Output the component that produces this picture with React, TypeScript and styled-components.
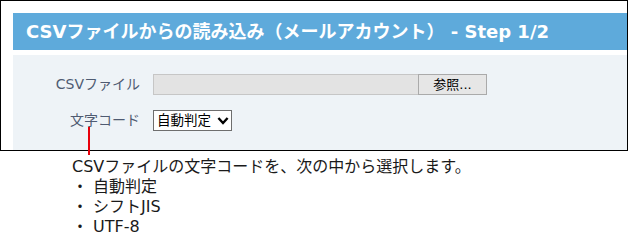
import styled, { createGlobalStyle } from 'styled-components';

const GlobalStyle = createGlobalStyle`
    body {
        margin: 0;
        background: #ffffff;
        font-family: "DejaVu Sans", "Noto Sans CJK JP", sans-serif;
        line-height: 1.2;
    }
`;

//STYLE

const Page = styled.div`
    position: relative;
    width: 628px;
`;

const Frame = styled.div`
    box-sizing: border-box;
    width: 628px;
    height: 151px;
    border: 1px solid #000;
    padding: 12px 0 0 12px;
    display: flex;
    flex-direction: column;
    gap: 5px;
`;

const Header = styled.div`
    height: 37px;
    background: #5eaadb;
    color: #fff;
    font-size: 18px;
    font-weight: 700;
    display: flex;
    align-items: center;
    padding-left: 13px;
    white-space: nowrap;
`;

const Panel = styled.div`
    flex: 1;
    background: #eef3f7;
    padding-top: 19px;
    display: grid;
    grid-template-columns: 127px auto;
    column-gap: 13px;
    row-gap: 15px;
    align-content: start;
`;

const Label = styled.div`
    height: 21px;
    display: flex;
    align-items: center;
    justify-content: flex-end;
    font-size: 14px;
    color: #4f5b72;
    white-space: nowrap;
`;

const FileRow = styled.div`
    display: flex;
`;

const FileBox = styled.div`
    box-sizing: border-box;
    width: 265px;
    height: 21px;
    background: #e3e3e3;
    border: 1px solid #c6c6c6;
    border-right: none;
`;

const Browse = styled.div`
    box-sizing: border-box;
    width: 69px;
    height: 21px;
    background: #e6e6e6;
    border: 1px solid #aaaaaa;
    display: flex;
    align-items: center;
    justify-content: center;
    font-size: 13px;
    color: #000;
`;

const Select = styled.div`
    box-sizing: border-box;
    width: 79px;
    height: 21px;
    background: #fff;
    border: 1px solid #6e6e6e;
    display: flex;
    align-items: center;
    justify-content: space-between;
    padding: 0 2px 0 3px;
    font-size: 13.5px;
    color: #000;
    white-space: nowrap;
`;

const Pointer = styled.div`
    position: absolute;
    left: 88px;
    top: 127px;
    width: 2px;
    height: 28px;
    background: #e8000b;
`;

const Note = styled.div`
    margin: 6px 0 0 72px;
    font-size: 16px;
    color: #1a1a1a;

    div {
        height: 20px;
        line-height: 20px;
        white-space: nowrap;
    }
`;

const Chevron = () => (
    <svg width="12" height="10" viewBox="0 0 12 10">
        <polyline points="1.4,2 6,7 10.6,2" fill="none" stroke="#000" strokeWidth="2.4" />
    </svg>
);

const App = () => (
    <Page>
        <GlobalStyle />
        <Frame>
            <Header>CSVファイルからの読み込み（メールアカウント） - Step 1/2</Header>
            <Panel>
                <Label>CSVファイル</Label>
                <FileRow>
                    <FileBox />
                    <Browse>参照...</Browse>
                </FileRow>
                <Label>文字コード</Label>
                <div>
                    <Select>
                        自動判定
                        <Chevron />
                    </Select>
                </div>
            </Panel>
        </Frame>
        <Pointer />
        <Note>
            <div>CSVファイルの文字コードを、次の中から選択します。</div>
            <div>・ 自動判定</div>
            <div>・ シフトJIS</div>
            <div>・ UTF-8</div>
        </Note>
    </Page>
);

export default App;
